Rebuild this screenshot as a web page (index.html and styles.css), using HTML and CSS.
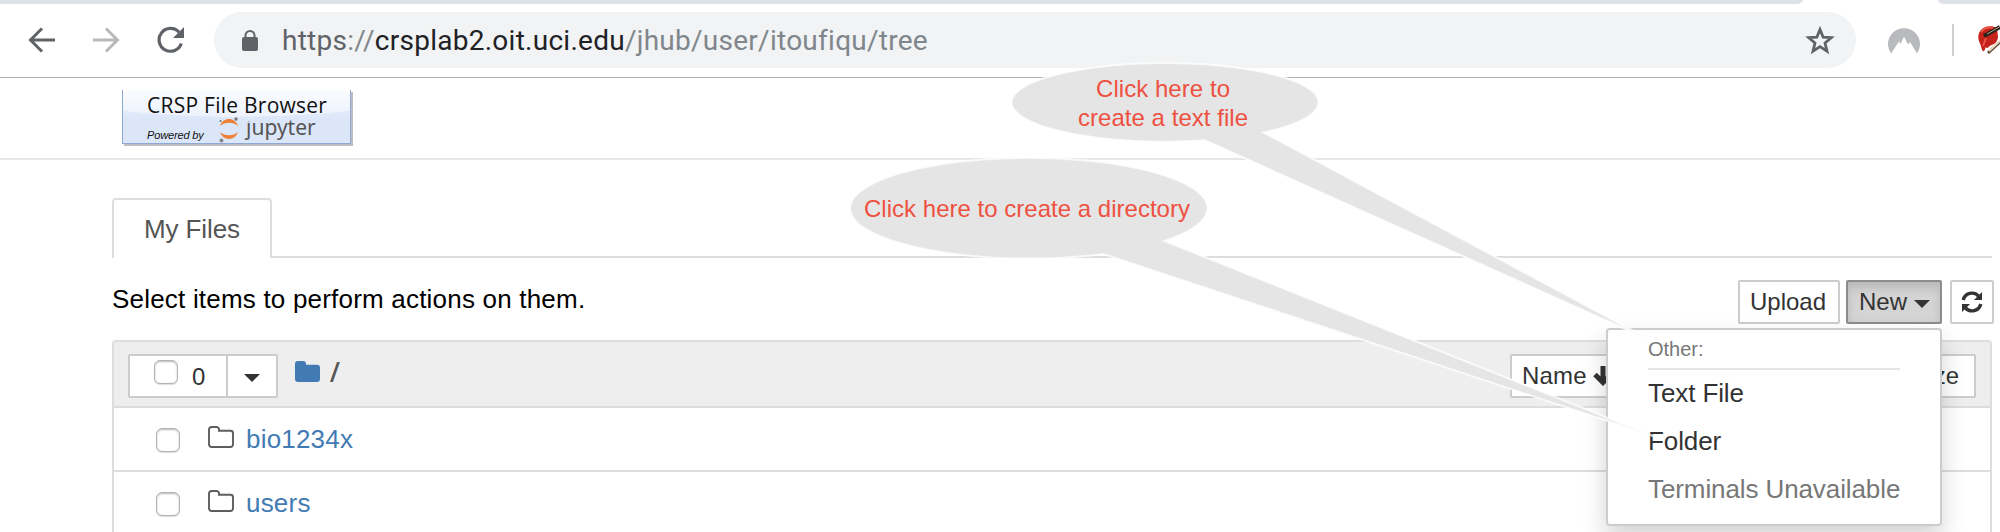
FILE: index.html
```html
<!DOCTYPE html>
<html lang="en">
<head>
<meta charset="utf-8">
<title>CRSP File Browser</title>
<link rel="stylesheet" href="styles.css">
</head>
<body>
<div class="tabstrip"><span class="strip-left"></span><span class="strip-right"></span></div>
<div class="toolbar">
  <svg class="nav-icon" width="28" height="28" viewBox="0 0 28 28"><path d="M27 14H3M14 2.500L2.500 14L14 25.500" fill="none" stroke="#5f6368" stroke-width="3"/></svg>
  <svg class="nav-icon" width="28" height="28" viewBox="0 0 28 28"><path d="M1 14h24M14 2.500L25.500 14L14 25.500" fill="none" stroke="#bababc" stroke-width="3"/></svg>
  <svg class="nav-icon" width="28" height="28" viewBox="0 0 28 28"><path d="M25.300 17.500A11.400 11.400 0 1 1 23 6.200" fill="none" stroke="#5f6368" stroke-width="3.200"/><path d="M28 1v11H17z" fill="#5f6368"/></svg>
  <div class="omnibox">
    <svg width="16" height="21" viewBox="0 0 16 21"><path d="M3.500 9V5.500a4.500 4.500 0 0 1 9 0V9" fill="none" stroke="#5f6368" stroke-width="2"/><rect y="7" width="16" height="14" rx="2" fill="#5f6368"/></svg>
    <span class="url"><span class="scheme">https</span>://<span class="host">crsplab2.oit.uci.edu</span>/jhub/user/itoufiqu/tree</span>
    <svg class="star" width="30" height="29" viewBox="0 0 30 29"><path d="M15 3.500l3.100 7.600 8.200.6-6.300 5.300 2 8.100-7-4.500-7 4.500 2-8.100-6.300-5.300 8.200-.6z" fill="none" stroke="#5f6368" stroke-width="2.800"/></svg>
  </div>
  <svg class="mountain" width="32" height="27" viewBox="0 0 32 27"><path d="M3 26.500A16 16 0 1 1 29 26.500L22 15l-2 2.500L16 9.500 12.500 17 11 14.500z" fill="#b9babe"/></svg>
  <span class="separator"></span>
  <svg class="violin" width="22" height="32" viewBox="0 0 22 32"><path d="M19 4C12 0 2 3 .5 11c-1 6 2 8 3 13 1 4 3 5 4-1 2 3 3-1 6-2 4-1 6-4 6.500-8z" fill="#c5221b"/><path d="M3 8c4-5 8-5 12-4M5 22l3-8" stroke="#ed5545" stroke-width="2" fill="none"/><path d="M6 12L22 3" stroke="#27201b" stroke-width="4"/><path d="M9 10L22 2.500" stroke="#b6a48b" stroke-width="1"/><path d="M10 29L22 18" stroke="#5a4a3a" stroke-width="3"/><path d="M11 27L22 17" stroke="#ead9b9" stroke-width="1.800"/></svg>
</div>
<header class="site-header">
  <div class="logo">
    <div class="logo-title">CRSP File Browser</div>
    <div class="logo-sub">
      <span class="powered">Powered by</span>
      <svg width="20" height="26" viewBox="0 0 20 26"><path d="M1 9C4-.2 16-.2 19 9 14 4.600 6 4.600 1 9zM1 15c3 9.200 15 9.200 18 0-5 4.400-13 4.400-18 0z" fill="#ee8136"/><circle cx="17" cy="2" r="1.700" fill="#777"/><circle cx="1.500" cy="4" r="1.100" fill="#777"/><circle cx="2.500" cy="23.500" r="2" fill="#888"/></svg>
      <span class="jupyter"><span class="dotless">j</span>upyter</span>
    </div>
  </div>
</header>
<main class="page">
  <div class="tabs"><div class="tab"><span>My Files</span></div></div>
  <div class="actions">
    <span class="hint">Select items to perform actions on them.</span>
    <button class="btn upload">Upload</button>
    <button class="btn new">New<i class="caret"></i></button>
    <button class="btn refresh"><svg width="22" height="22" viewBox="0 0 22 22"><path d="M2.200 9A9 9 0 0 1 17.500 5M19.800 13A9 9 0 0 1 4.500 17" fill="none" stroke="#333" stroke-width="3.400"/><path d="M21 1v8h-8zM1 21v-8h8z" fill="#333"/></svg></button>
  </div>
  <section class="list">
    <div class="list-head">
      <div class="select-group"><div class="select-all"><i class="check"></i><span>0</span></div><div class="select-menu"><i class="caret"></i></div></div>
      <svg class="crumb" width="25" height="21" viewBox="0 0 25 21"><path d="M3 0h5a3 3 0 0 1 3 3v.8h11a3 3 0 0 1 3 3V18a3 3 0 0 1-3 3H3a3 3 0 0 1-3-3V3a3 3 0 0 1 3-3z" fill="#427bb4"/></svg>
      <span class="slash">/</span>
      <button class="btn sort-name">Name<svg width="20" height="20" viewBox="0 0 20 20"><path d="M10 0v16M2 8.500l8 8 8-8" fill="none" stroke="#333" stroke-width="5"/></svg></button>
      <button class="btn sort-size">File size</button>
    </div>
    <div class="row"><i class="check"></i><svg width="26" height="22" viewBox="0 0 26 22"><path d="M3.500 1h5a2.500 2.500 0 0 1 2.500 2.500V4.800h11.500A2.500 2.500 0 0 1 25 7.300v11.200a2.500 2.500 0 0 1-2.500 2.500h-19A2.500 2.500 0 0 1 1 18.500v-15A2.500 2.500 0 0 1 3.500 1z" fill="none" stroke="#5e5e5e" stroke-width="1.900"/></svg><a>bio1234x</a></div>
    <div class="row"><i class="check"></i><svg width="26" height="22" viewBox="0 0 26 22"><path d="M3.500 1h5a2.500 2.500 0 0 1 2.500 2.500V4.800h11.500A2.500 2.500 0 0 1 25 7.300v11.200a2.500 2.500 0 0 1-2.500 2.500h-19A2.500 2.500 0 0 1 1 18.500v-15A2.500 2.500 0 0 1 3.500 1z" fill="none" stroke="#5e5e5e" stroke-width="1.900"/></svg><a>users</a></div>
  </section>
</main>
<div class="menu">
  <div class="menu-label">Other:</div>
  <div class="menu-item">Text File</div>
  <div class="menu-item">Folder</div>
  <div class="menu-item disabled">Terminals Unavailable</div>
</div>
<svg class="callouts" width="2000" height="532" viewBox="0 0 2000 532">
  <g fill="#e5e5e5" stroke="#fff" stroke-opacity=".75" stroke-width="2">
    <path d="M1263.500 132.500L1652 341L1205 140.300A153.500 39.300 0 1 1 1263.500 132.500z"/>
    <path d="M1164.500 241L1653 436L1103.500 254A178.700 50.400 0 1 1 1164.500 241z"/>
  </g>
  <g class="callout-text">
    <text x="1096" y="96.500" textLength="134">Click here to</text>
    <text x="1078" y="125.500" textLength="170">create a text file</text>
    <text x="864" y="217" textLength="326">Click here to create a directory</text>
  </g>
</svg>
</body>
</html>
```

FILE: styles.css
```css
* { box-sizing: border-box; }
body {
  margin: 0;
  width: 2000px;
  height: 532px;
  overflow: hidden;
  position: relative;
  background: #fff;
  color: #333;
  font-family: "Liberation Sans", Arial, sans-serif;
}
svg { display: block; flex: none; }

.tabstrip { display: flex; justify-content: space-between; height: 4px; }
.strip-left { width: 1803px; background: #dee1e6; border-bottom-right-radius: 10px 6px; }
.strip-right { width: 62px; background: #dee1e6; border-bottom-left-radius: 10px 6px; }

.toolbar {
  display: flex;
  align-items: center;
  height: 74px;
  padding: 0 0 1px 28px;
  border-bottom: 1px solid #b1b2b3;
}
.nav-icon { margin-right: 36px; }
.nav-icon + .nav-icon + .nav-icon { margin-right: 30px; }
.omnibox {
  display: flex;
  align-items: center;
  width: 1642px;
  height: 56px;
  padding: 0 21px 0 28px;
  border-radius: 28px;
  background: #f1f3f4;
}
.url {
  margin-left: 24px;
  padding-top: 1px;
  font: 28px/40px Roboto, sans-serif;
  letter-spacing: .26px;
  color: #80868b;
}
.scheme { color: #5f6368; }
.host { color: #202124; }
.star { margin-left: auto; }
.mountain { margin-left: 32px; }
.separator { width: 2px; height: 32px; margin: 0 24px 0 32px; background: #cfcfd1; }

.site-header { height: 82px; padding: 12px 0 0 122px; border-bottom: 2px solid #e7e7e7; }
.logo {
  width: 229px;
  height: 54px;
  padding-left: 24px;
  border: solid #8ea9d6;
  border-width: 0 1px 1px;
  background: radial-gradient(ellipse 180px 27px at 50% 0, rgba(255,255,255,.45) 98%, transparent), linear-gradient(#f6f9ff, #dbe6f9 55%);
  box-shadow: 2px 2px 0 #bcbec3;
  color: #111;
}
.logo-title { height: 27px; font: 500 21px/30px "Open Sans", sans-serif; letter-spacing: .25px; white-space: nowrap; }
.logo-sub { display: flex; height: 26px; }
.powered { width: 72px; padding-top: 12px; font-size: 11px; line-height: 13px; font-style: italic; letter-spacing: -.15px; }
.jupyter { margin-left: 7px; font: 21px/20px "Noto Sans", sans-serif; color: #555; }
.dotless { display: inline-block; clip-path: inset(4px -4px -8px -4px); }

.page { height: 372px; overflow: hidden; padding: 38px 6px 0 112px; }
.tabs { display: flex; height: 60px; margin-right: 2px; border-bottom: 2px solid #ddd; }
.tab {
  width: 160px;
  height: 60px;
  padding: 13px 0 0 30px;
  border: 2px solid #ddd;
  border-bottom: 0;
  border-radius: 4px 4px 0 0;
  background: #fff;
  font-size: 26px;
  line-height: 32px;
  letter-spacing: -.1px;
  color: #555;
}
.actions { display: flex; height: 82px; padding-top: 22px; }
.hint { margin-right: auto; font-size: 26px; line-height: 38px; letter-spacing: .2px; color: #000; }
.btn {
  display: flex;
  align-items: center;
  height: 44px;
  padding: 0 10px;
  border: 2px solid #ccc;
  border-radius: 2px;
  background: #fff;
  color: #333;
  font: 24px/38px "Liberation Sans", Arial, sans-serif;
}
.upload { width: 102px; }
.new { width: 96px; margin: 0 8px 0 6px; padding-left: 11px; border-color: #8c8c8c; background: #d4d4d4; box-shadow: inset 0 6px 10px rgba(0,0,0,.125); }
.new .caret { margin-left: 7px; }
.refresh { width: 44px; padding: 0 9px; }
.caret { flex: none; width: 16px; border: 8px solid transparent; border-top-color: #333; border-bottom: 0; margin-top: 4px; }

.list { height: 192px; margin-right: 2px; overflow: hidden; border: 2px solid #ddd; border-bottom: 0; border-radius: 4px 4px 0 0; }
.list-head { display: flex; height: 66px; padding: 12px 14px; background: #eee; border-bottom: 2px solid #ddd; }
.select-group { display: flex; width: 150px; height: 44px; border: 2px solid #ccc; border-radius: 2px; background: #fff; font-size: 24px; }
.select-all { display: flex; width: 98px; padding: 4px 0 0 24px; border-right: 2px solid #ccc; line-height: 33px; }
.select-all span { margin-left: 14px; }
.select-menu { flex: 1; padding: 14px 0 0 16px; }
.select-menu .caret { display: block; }
.check {
  flex: none;
  width: 24px;
  height: 24px;
  border: 1px solid #b4b4b4;
  border-radius: 6px;
  background: #fff;
  box-shadow: inset 0 1px 2px #bbb, 0 1px 1px #ddd;
}
.crumb { margin: 7px 0 0 17px; }
.slash { margin-left: 10px; font-size: 27px; line-height: 38px; transform: scaleX(1.3); transform-origin: left; color: #555; }
.sort-name { width: 120px; margin-left: auto; padding-left: 10px; letter-spacing: .2px; }
.sort-name svg { margin-left: 6px; }
.sort-size { width: 120px; margin-left: 226px; justify-content: flex-end; padding-right: 15px; white-space: nowrap; }
.row { display: flex; height: 64px; padding: 18px 0 0 42px; border-bottom: 2px solid #ddd; }
.row .check { margin-top: 2px; }
.row svg { margin: 0 12px 0 28px; }
.row a { font-size: 26px; line-height: 26px; letter-spacing: .2px; color: #427bb4; }

.menu {
  position: absolute;
  left: 1606px;
  top: 328px;
  width: 336px;
  height: 198px;
  padding: 10px 40px;
  border: 2px solid #ccc;
  border-radius: 4px;
  background: #fff;
  box-shadow: 0 12px 24px rgba(0,0,0,.175);
  white-space: nowrap;
}
.menu-label { height: 30px; margin-bottom: 8px; border-bottom: 2px solid #e5e5e5; font-size: 20px; line-height: 18px; color: #777; }
.menu-item { height: 48px; font-size: 26px; line-height: 46px; letter-spacing: -.1px; color: #333; }
.menu-label + .menu-item { margin-top: -8px; }
.menu .disabled { color: #777; }

.callouts { position: absolute; left: 0; top: 0; }
.callout-text { font-size: 24px; fill: #ee5141; }
```
